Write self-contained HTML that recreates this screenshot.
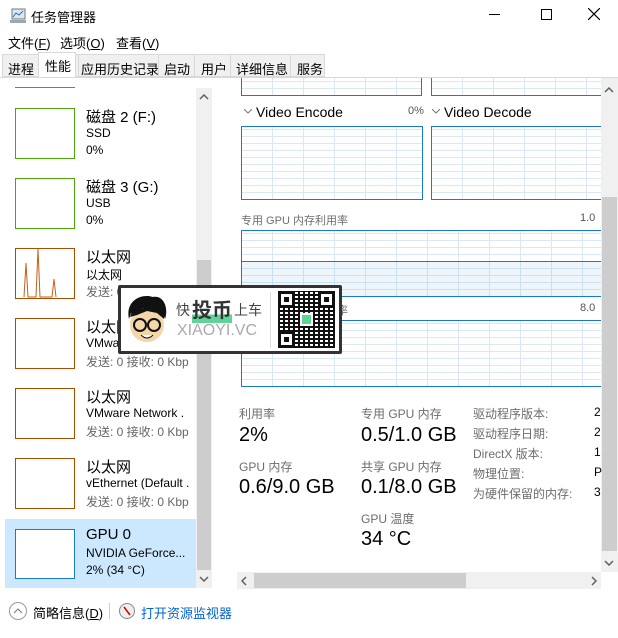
<!DOCTYPE html><html><head><meta charset="utf-8"><style>
*{margin:0;padding:0;box-sizing:border-box}
body{width:618px;height:638px;overflow:hidden;background:#fff;font-family:"Liberation Sans","Noto Sans CJK SC",sans-serif;color:#000;position:relative}
.a{position:absolute;white-space:nowrap}
.g{position:absolute;border:1px solid #1979ca;background-color:#fff;background-image:repeating-linear-gradient(90deg,transparent 0 30px,#d9e8f4 30px 31px),repeating-linear-gradient(0deg,transparent 0 6px,#d9e8f4 6px 7px)}
.th{position:absolute;left:15px;width:60px;height:51px;border:1px solid #4da60c}
.tho{position:absolute;left:15px;width:60px;height:51px;border:1px solid #a74f01}
.t1{position:absolute;left:86px;font-size:15px}
.t2{position:absolute;left:86px;font-size:12px}
.t3{position:absolute;left:86px;font-size:12px;color:#666}
.lb{position:absolute;font-size:12px;color:#6d6d6d}
.v{position:absolute;font-size:20px}
.rl{position:absolute;left:473px;font-size:12px;color:#6d6d6d}
</style></head><body>
<!-- title -->
<svg class="a" style="left:9px;top:8px" width="18" height="16"><rect x="3" y="1" width="13" height="10" fill="#dde6ee" stroke="#6a7a88"/><polyline points="4,9 7,5 10,7 14,3" fill="none" stroke="#2a6fb0"/><rect x="1" y="12" width="16" height="3" fill="#9aa"/></svg>
<div class="a" style="left:31px;top:7px;font-size:13px">任务管理器</div>
<div class="a" style="left:489px;top:14px;width:11px;height:1px;background:#000"></div>
<div class="a" style="left:541px;top:9px;width:11px;height:11px;border:1px solid #000"></div>
<svg class="a" style="left:588px;top:8px" width="12" height="12"><path d="M0 0L12 12M12 0L0 12" stroke="#000" stroke-width="1.2"/></svg>
<!-- menu -->
<div class="a" style="left:8px;top:33px;font-size:13px">文件(<u>F</u>)</div>
<div class="a" style="left:60px;top:33px;font-size:13px">选项(<u>O</u>)</div>
<div class="a" style="left:116px;top:33px;font-size:13px">查看(<u>V</u>)</div>
<!-- tabs -->
<div class="a" style="left:2px;top:54px;width:323px;height:23px;background:#f0f0f0;border:1px solid #d9d9d9"></div>
<div class="a" style="left:38px;top:52px;width:38px;height:26px;background:#fff;border:1px solid #d9d9d9;border-bottom:none"></div>
<div class="a" style="left:8px;top:59px;font-size:13px">进程</div>
<div class="a" style="left:45px;top:56px;font-size:13px">性能</div>
<div class="a" style="left:81px;top:59px;font-size:13px">应用历史记录</div>
<div class="a" style="left:164px;top:59px;font-size:13px">启动</div>
<div class="a" style="left:201px;top:59px;font-size:13px">用户</div>
<div class="a" style="left:236px;top:59px;font-size:13px">详细信息</div>
<div class="a" style="left:297px;top:59px;font-size:13px">服务</div>
<div class="a" style="left:78px;top:54px;width:1px;height:23px;background:#d9d9d9"></div>
<div class="a" style="left:158px;top:54px;width:1px;height:23px;background:#d9d9d9"></div>
<div class="a" style="left:194px;top:54px;width:1px;height:23px;background:#d9d9d9"></div>
<div class="a" style="left:230px;top:54px;width:1px;height:23px;background:#d9d9d9"></div>
<div class="a" style="left:290px;top:54px;width:1px;height:23px;background:#d9d9d9"></div>
<div class="a" style="left:0;top:77px;width:618px;height:1px;background:#d9d9d9"></div>
<!-- left list -->
<div class="a" style="left:15px;top:87px;width:60px;height:1px;background:#4da60c"></div>
<div class="th" style="top:108px"></div>
<div class="t1" style="top:106px">磁盘 2 (F:)</div><div class="t2" style="top:126px">SSD</div><div class="t2" style="top:143px">0%</div>
<div class="th" style="top:178px"></div>
<div class="t1" style="top:176px">磁盘 3 (G:)</div><div class="t2" style="top:196px">USB</div><div class="t2" style="top:213px">0%</div>
<div class="tho" style="top:248px"><svg width="58" height="49"><polyline points="8,48 10,14 12,48 20,48 22,0 24,48 36,48 38,30 40,48" fill="none" stroke="#c0621a"/></svg></div>
<div class="t1" style="top:246px">以太网</div><div class="t2" style="top:266px">以太网</div><div class="t3" style="top:283px">发送: 0 接收: 0 Kbp</div>
<div class="tho" style="top:318px"></div>
<div class="t1" style="top:316px">以太网</div><div class="t2" style="top:336px">VMware Network .</div><div class="t3" style="top:353px">发送: 0 接收: 0 Kbp</div>
<div class="tho" style="top:388px"></div>
<div class="t1" style="top:386px">以太网</div><div class="t2" style="top:406px">VMware Network .</div><div class="t3" style="top:423px">发送: 0 接收: 0 Kbp</div>
<div class="tho" style="top:458px"></div>
<div class="t1" style="top:456px">以太网</div><div class="t2" style="top:476px">vEthernet (Default .</div><div class="t3" style="top:493px">发送: 0 接收: 0 Kbp</div>
<div class="a" style="left:5px;top:519px;width:191px;height:69px;background:#cce8ff"></div>
<div class="a" style="left:15px;top:529px;width:60px;height:50px;border:1px solid #1979ca;background:#fff"></div>
<div class="t1" style="top:526px">GPU 0</div><div class="t2" style="top:546px">NVIDIA GeForce...</div><div class="t2" style="top:563px">2% (34 °C)</div>
<!-- left scrollbar -->
<div class="a" style="left:196px;top:88px;width:16px;height:500px;background:#f0f0f0"></div>
<div class="a" style="left:197px;top:260px;width:14px;height:310px;background:#cdcdcd"></div>
<svg class="a" style="left:199px;top:94px" width="10" height="6"><path d="M1 5L5 1L9 5" fill="none" stroke="#606060" stroke-width="1.5"/></svg>
<svg class="a" style="left:199px;top:576px" width="10" height="6"><path d="M1 1L5 5L9 1" fill="none" stroke="#606060" stroke-width="1.5"/></svg>
<!-- right panel -->
<div class="g" style="left:241px;top:78px;width:181px;height:18px;border-top:none"></div>
<div class="g" style="left:431px;top:78px;width:175px;height:18px;border-top:none;border-right:none"></div>
<svg class="a" style="left:244px;top:109px" width="8" height="5"><path d="M0 0L4 4L8 0" fill="none" stroke="#777"/></svg>
<div class="a" style="left:256px;top:104px;font-size:14px">Video Encode</div>
<div class="a" style="left:408px;top:105px;font-size:11px;color:#555">0%</div>
<svg class="a" style="left:432px;top:109px" width="8" height="5"><path d="M0 0L4 4L8 0" fill="none" stroke="#777"/></svg>
<div class="a" style="left:444px;top:104px;font-size:14px">Video Decode</div>
<div class="g" style="left:241px;top:126px;width:182px;height:74px"></div>
<div class="g" style="left:431px;top:126px;width:175px;height:74px;border-right:none"></div>
<div class="lb" style="left:241px;top:212px;font-size:11px">专用 GPU 内存利用率</div>
<div class="a" style="left:580px;top:212px;font-size:11px;color:#555">1.0</div>
<div class="g" style="left:241px;top:230px;width:370px;height:67px;border-right:none"></div>
<div class="a" style="left:242px;top:261px;width:370px;height:35px;background:rgba(25,121,202,.07);border-top:1px solid #1979ca"></div>
<div class="lb" style="left:241px;top:302px;font-size:11px">共享 GPU 内存利用率</div>
<div class="a" style="left:580px;top:302px;font-size:11px;color:#555">8.0</div>
<div class="g" style="left:241px;top:320px;width:370px;height:67px;border-right:none"></div>
<!-- right scrollbar -->
<div class="a" style="left:601px;top:78px;width:17px;height:494px;background:#f0f0f0"></div>
<div class="a" style="left:602px;top:197px;width:15px;height:354px;background:#cdcdcd"></div>
<svg class="a" style="left:604px;top:87px" width="10" height="6"><path d="M1 5L5 1L9 5" fill="none" stroke="#606060" stroke-width="1.5"/></svg>
<svg class="a" style="left:604px;top:560px" width="10" height="6"><path d="M1 1L5 5L9 1" fill="none" stroke="#606060" stroke-width="1.5"/></svg>
<!-- stats -->
<div class="lb" style="left:239px;top:405px">利用率</div><div class="v" style="left:239px;top:424px">2%</div>
<div class="lb" style="left:239px;top:458px">GPU 内存</div><div class="v" style="left:239px;top:476px">0.6/9.0 GB</div>
<div class="lb" style="left:361px;top:405px">专用 GPU 内存</div><div class="v" style="left:361px;top:424px">0.5/1.0 GB</div>
<div class="lb" style="left:361px;top:458px">共享 GPU 内存</div><div class="v" style="left:361px;top:476px">0.1/8.0 GB</div>
<div class="lb" style="left:361px;top:510px">GPU 温度</div><div class="v" style="left:361px;top:528px">34 °C</div>
<div class="rl" style="top:405px">驱动程序版本:</div>
<div class="rl" style="top:425px">驱动程序日期:</div>
<div class="rl" style="top:445px">DirectX 版本:</div>
<div class="rl" style="top:465px">物理位置:</div>
<div class="rl" style="top:485px">为硬件保留的内存:</div>
<div class="a" style="left:594px;top:405px;font-size:12px">2</div>
<div class="a" style="left:594px;top:425px;font-size:12px">2</div>
<div class="a" style="left:594px;top:445px;font-size:12px">1</div>
<div class="a" style="left:594px;top:465px;font-size:12px">P</div>
<div class="a" style="left:594px;top:485px;font-size:12px">3</div>
<!-- h scrollbar -->
<div class="a" style="left:237px;top:572px;width:364px;height:17px;background:#f0f0f0"></div>
<div class="a" style="left:254px;top:573px;width:212px;height:15px;background:#cdcdcd"></div>
<svg class="a" style="left:241px;top:576px" width="6" height="10"><path d="M5 1L1 5L5 9" fill="none" stroke="#606060" stroke-width="1.5"/></svg>
<svg class="a" style="left:591px;top:576px" width="6" height="10"><path d="M1 1L5 5L1 9" fill="none" stroke="#606060" stroke-width="1.5"/></svg>
<!-- footer -->
<div class="a" style="left:9px;top:602px;width:18px;height:18px;border:1px solid #999;border-radius:50%"><svg width="16" height="16" style="display:block"><path d="M4 10L8 6L12 10" fill="none" stroke="#777"/></svg></div>
<div class="a" style="left:33px;top:603px;font-size:13px">简略信息(<u>D</u>)</div>
<div class="a" style="left:109px;top:603px;width:1px;height:16px;background:#ccc"></div>
<div class="a" style="left:119px;top:603px;width:16px;height:16px;border:1px solid #888;border-radius:50%;background:#eee"><svg width="14" height="14" style="display:block"><line x1="4" y1="3" x2="10" y2="11" stroke="#c00" stroke-width="1.5"/></svg></div>
<div class="a" style="left:141px;top:603px;font-size:13px;color:#0066cc">打开资源监视器</div>
<!-- watermark -->
<div class="a" style="left:118px;top:285px;width:224px;height:69px;border:3px solid #333;background:#fff;border-radius:2px"></div>
<div class="a" style="left:123px;top:291px;width:48px;height:58px">
<svg width="48" height="58"><path d="M6 28 C2 10 18 2 30 6 C40 4 46 16 42 28 L40 22 L8 22 Z" fill="#111"/><ellipse cx="24" cy="34" rx="17" ry="17" fill="#f4d6a8"/><path d="M7 26 L12 12 L20 18 L28 8 L34 18 L42 14 L41 28 L34 22 L24 20 L14 24 Z" fill="#111"/><circle cx="17" cy="34" r="6" fill="none" stroke="#111" stroke-width="2"/><circle cx="31" cy="34" r="6" fill="none" stroke="#111" stroke-width="2"/><path d="M18 44 Q24 50 30 44" fill="#fff" stroke="#111"/></svg></div>
<div class="a" style="left:176px;top:300px;font-size:14px;color:#444">快</div>
<div class="a" style="left:192px;top:294px;font-size:20px;font-weight:bold;color:#333;background:linear-gradient(transparent 70%,#5fd39a 70%)">投币</div>
<div class="a" style="left:234px;top:300px;font-size:14px;color:#444">上车</div>
<div class="a" style="left:177px;top:322px;font-size:16px;color:#aaa">XIAOYI.VC</div>
<div class="a" style="left:270px;top:292px;width:1px;height:56px;background:#ddd"></div>
<div class="a" style="left:278px;top:291px;width:57px;height:57px;background:#fff;background-image:repeating-linear-gradient(90deg,#111 0 2px,transparent 2px 5px),repeating-linear-gradient(0deg,#111 0 2px,transparent 2px 4px)"></div>
<div class="a" style="left:278px;top:291px;width:17px;height:17px;border:3px solid #111;background:#fff;box-shadow:inset 0 0 0 3px #fff,inset 0 0 0 8px #111"></div>
<div class="a" style="left:318px;top:291px;width:17px;height:17px;border:3px solid #111;background:#fff;box-shadow:inset 0 0 0 3px #fff,inset 0 0 0 8px #111"></div>
<div class="a" style="left:278px;top:331px;width:17px;height:17px;border:3px solid #111;background:#fff;box-shadow:inset 0 0 0 3px #fff,inset 0 0 0 8px #111"></div>
<div class="a" style="left:300px;top:313px;width:13px;height:13px;background:#5fd39a;border:2px solid #fff"></div>
</body></html>
